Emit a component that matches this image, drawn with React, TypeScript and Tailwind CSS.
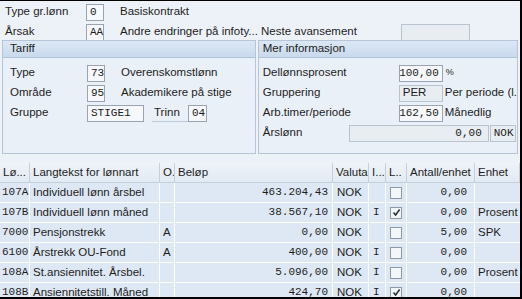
import React from 'react';

interface PayRow {
  code: string,
  text: string,
  o: string,
  amount: string,
  currency: string,
  ind: string,
  checked: boolean,
  qty: string,
  unit: string,
}

const rows: PayRow[] = [
  { code: '107A', text: 'Individuell lønn årsbel', o: '', amount: '463.204,43', currency: 'NOK', ind: '', checked: false, qty: '0,00', unit: '' },
  { code: '107B', text: 'Individuell lønn måned', o: '', amount: '38.567,10', currency: 'NOK', ind: 'I', checked: true, qty: '0,00', unit: 'Prosent' },
  { code: '7000', text: 'Pensjonstrekk', o: 'A', amount: '0,00', currency: 'NOK', ind: '', checked: false, qty: '5,00', unit: 'SPK' },
  { code: '6100', text: 'Årstrekk OU-Fond', o: 'A', amount: '400,00', currency: 'NOK', ind: 'I', checked: false, qty: '0,00', unit: '' },
  { code: '108A', text: 'St.ansiennitet. Årsbel.', o: '', amount: '5.096,00', currency: 'NOK', ind: 'I', checked: false, qty: '0,00', unit: 'Prosent' },
  { code: '108B', text: 'Ansiennitetstill. Måned', o: '', amount: '424,70', currency: 'NOK', ind: 'I', checked: true, qty: '0,00', unit: '' },
];

const mono = "font-['Liberation_Mono',monospace] text-[11px]";

function Field({ value, className = '', right = false, readOnly = false }: { value: string, className?: string, right?: boolean, readOnly?: boolean }) {
  return (
    <div className={`h-[17px] border flex items-center px-[3px] ${readOnly ? 'bg-[#e8edf2] border-[#b9c3cd]' : 'bg-[#f6f8fb] border-[#98a4b1]'} ${right ? 'justify-end' : ''} ${className}`}>
      <span className={`${mono} text-[#1b1b1b] leading-none`}>{value}</span>
    </div>
  );
}

function Check({ checked }: { checked: boolean }) {
  return (
    <div className="w-[12px] h-[12px] border border-[#8f9aa6] bg-[#f4f7fa] flex items-center justify-center">
      {checked && (
        <svg width="9" height="9" viewBox="0 0 9 9">
          <path d="M1.5 4.5 L3.6 7 L7.6 1.5" fill="none" stroke="#1f2a36" strokeWidth="1.4" />
        </svg>
      )}
    </div>
  );
}

export default function App() {
  return (
    <div className="w-[522px] h-[299px] overflow-hidden bg-[#edf2f8] border-t border-r-2 border-b-2 border-black font-['Liberation_Sans',sans-serif] text-[11.5px] text-[#1d1d1d]">
      {/* Header fields */}
      <div className="pt-[1px]">
        <div className="h-[20px] flex items-center pl-[5px]">
          <span className="w-[81px]">Type gr.lønn</span>
          <Field value="0" className="w-[18px]" />
          <span className="ml-[16px]">Basiskontrakt</span>
        </div>
        <div className="h-[20px] flex items-center pl-[5px]">
          <span className="w-[81px]">Årsak</span>
          <Field value="AA" className="w-[18px]" />
          <span className="ml-[16px] w-[141px] whitespace-nowrap overflow-hidden">Andre endringer på infoty...</span>
          <span className="w-[140px]">Neste avansement</span>
          <Field value="" readOnly className="w-[69px]" />
        </div>
      </div>

      {/* Group boxes */}
      <div className="flex gap-[2px] px-[2px] mt-[-2px]">
        <div className="w-[256px] h-[114px] border border-[#b6c6d8] bg-[#e9f0f8]">
          <div className="h-[17px] bg-gradient-to-b from-[#dce7f4] to-[#c9daed] border-b border-[#b0c3d8] flex items-center pl-[7px]">Tariff</div>
          <div className="pl-[7px] pt-[5px]">
            <div className="h-[20px] flex items-center">
              <span className="w-[77px]">Type</span>
              <Field value="73" className="w-[18px]" />
              <span className="ml-[16px]">Overenskomstlønn</span>
            </div>
            <div className="h-[20px] flex items-center">
              <span className="w-[77px]">Område</span>
              <Field value="95" className="w-[18px]" />
              <span className="ml-[16px]">Akademikere på stige</span>
            </div>
            <div className="h-[20px] flex items-center">
              <span className="w-[77px]">Gruppe</span>
              <Field value="STIGE1" className="w-[57px]" />
              <span className="ml-[8px] w-[36px] pl-[2px] border-b border-[#b9c6d4]">Trinn</span>
              <Field value="04" className="w-[19px]" />
            </div>
          </div>
        </div>
        <div className="flex-1 h-[114px] border border-[#b6c6d8] bg-[#e9f0f8]">
          <div className="h-[17px] bg-gradient-to-b from-[#dce7f4] to-[#c9daed] border-b border-[#b0c3d8] flex items-center pl-[4px]">Mer informasjon</div>
          <div className="pl-[4px] pt-[5px]">
            <div className="h-[20px] flex items-center">
              <span className="w-[136px]">Dellønnsprosent</span>
              <Field value="100,00" right className="w-[44px]" />
              <span className="ml-[3px] text-[9px]">%</span>
            </div>
            <div className="h-[20px] flex items-center">
              <span className="w-[136px]">Gruppering</span>
              <div className="w-[44px] h-[17px] border border-[#b9c3cd] bg-[#e8edf2] flex items-center px-[3px]">PER</div>
              <span className="ml-[2px] whitespace-nowrap">Per periode (l.</span>
            </div>
            <div className="h-[20px] flex items-center">
              <span className="w-[136px]">Arb.timer/periode</span>
              <Field value="162,50" right className="w-[44px]" />
              <span className="ml-[2px]">Månedlig</span>
            </div>
            <div className="h-[20px] flex items-center">
              <span className="w-[86px]">Årslønn</span>
              <Field value="0,00" right readOnly className="w-[140px] pr-[6px]" />
              <Field value="NOK" readOnly className="w-[26px] ml-[1px]" />
            </div>
          </div>
        </div>
      </div>

      {/* Table */}
      <div className="mt-[9px] grid grid-cols-[30px_130px_15px_158px_36px_17px_21px_68px_1fr] bg-[#dde8f4]">
        {['Lø...', 'Langtekst for lønnart', 'O.', 'Beløp', 'Valuta', 'I...', 'L..', 'Antall/enhet', 'Enhet'].map((h) => (
          <div key={h} className="h-[20px] flex items-center pl-[3px] bg-gradient-to-b from-[#eef3f9] to-[#e2eaf3] border-r border-b border-[#c4cfdb] whitespace-nowrap overflow-hidden">{h}</div>
        ))}
        {rows.map((r) => (
          <React.Fragment key={r.code}>
            <div className={`h-[20px] flex items-center pl-[2px] border-r border-b border-white ${mono}`}>{r.code}</div>
            <div className="h-[20px] flex items-center pl-[3px] border-r border-b border-white whitespace-nowrap">{r.text}</div>
            <div className="h-[20px] flex items-center pl-[3px] border-r border-b border-white">{r.o}</div>
            <div className={`h-[20px] flex items-center justify-end pr-[4px] border-r border-b border-white ${mono}`}>{r.amount}</div>
            <div className="h-[20px] flex items-center pl-[4px] border-r border-b border-white">{r.currency}</div>
            <div className={`h-[20px] flex items-center pl-[4px] border-r border-b border-white ${mono}`}>{r.ind}</div>
            <div className="h-[20px] flex items-center justify-center border-r border-b border-white"><Check checked={r.checked} /></div>
            <div className={`h-[20px] flex items-center justify-end pr-[7px] border-r border-b border-white ${mono}`}>{r.qty}</div>
            <div className="h-[20px] flex items-center pl-[3px] border-b border-white">{r.unit}</div>
          </React.Fragment>
        ))}
      </div>
    </div>
  );
}
